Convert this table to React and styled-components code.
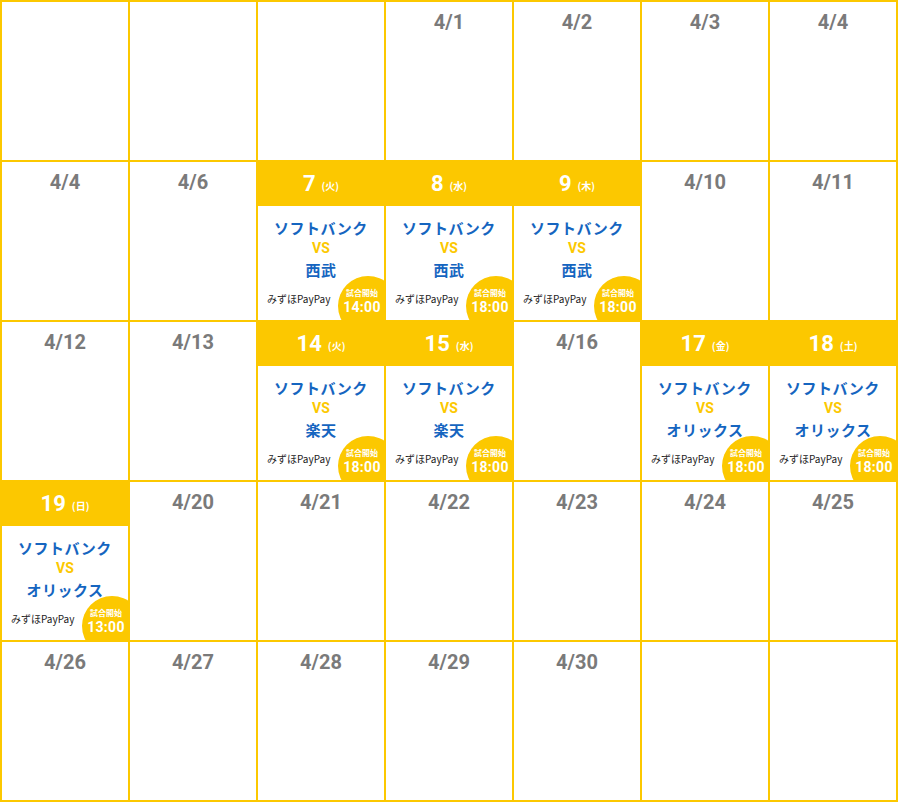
import React from "react";
import styled, { createGlobalStyle } from "styled-components";

const YELLOW = "#fcc800";
const BLUE = "#1565c0";

const Global = createGlobalStyle`
  html, body { margin: 0; padding: 0; background: #fff; }
  body { font-family: Roboto, "Noto Sans CJK JP", sans-serif; }
`;

const Grid = styled.div`
  display: grid;
  grid-template-columns: repeat(7, 126px);
  grid-auto-rows: 158px;
  gap: 2px;
  padding: 2px;
  width: 898px;
  box-sizing: border-box;
  background: ${YELLOW};
`;

const Cell = styled.div`
  position: relative;
  overflow: hidden;
  background: #fff;
  display: flex;
  flex-direction: column;
`;

const DateLabel = styled.div`
  text-align: center;
  font-family: Roboto, "Noto Sans CJK JP", sans-serif;
  font-weight: 700;
  font-size: 20px;
  line-height: 24px;
  color: #7a7a7a;
  padding-top: 8px;
`;

const Header = styled.div`
  height: 43px;
  background: ${YELLOW};
  display: flex;
  align-items: center;
  justify-content: center;
  gap: 6px;
  color: #fff;
  padding-bottom: 1px;
`;

const DayNum = styled.span`
  font-family: Roboto, "Noto Sans CJK JP", sans-serif;
  font-weight: 700;
  font-size: 22px;
  line-height: 26px;
`;

const Weekday = styled.span`
  font-family: "Noto Sans CJK JP", sans-serif;
  font-weight: 700;
  font-size: 10px;
  line-height: 12px;
  margin-top: 5px;
`;

const Teams = styled.div`
  display: flex;
  flex-direction: column;
  align-items: center;
  padding-top: 11px;
  font-family: "Noto Sans CJK JP", sans-serif;
  font-weight: 700;
  color: ${BLUE};
`;

const Team = styled.div`
  font-size: 15px;
  line-height: 21px;
  letter-spacing: 0.5px;
`;

const Vs = styled.div`
  font-family: Roboto, "Noto Sans CJK JP", sans-serif;
  font-size: 14px;
  line-height: 21px;
  color: ${YELLOW};
`;

const Stadium = styled.div`
  margin-top: auto;
  padding: 0 0 15px 9px;
  font-family: "Noto Sans CJK JP", sans-serif;
  font-size: 10px;
  line-height: 12px;
  color: #222;
`;

const StartBadge = styled.div`
  position: absolute;
  right: -14px;
  bottom: -16px;
  width: 60px;
  height: 60px;
  border-radius: 50%;
  background: ${YELLOW};
  color: #fff;
  display: flex;
  flex-direction: column;
  align-items: center;
  box-sizing: border-box;
  padding: 11px 12px 0 0;
`;

const StartLabel = styled.div`
  font-family: "Noto Sans CJK JP", sans-serif;
  font-weight: 700;
  font-size: 8px;
  line-height: 12px;
`;

const StartTime = styled.div`
  font-family: Roboto, sans-serif;
  font-weight: 700;
  font-size: 14px;
  line-height: 17px;
  letter-spacing: 0.3px;
`;

const ev = (day, wd, opp, time) => ({ type: "event", day, wd, opp, time });
const d = (label) => ({ type: "date", label });
const E = { type: "empty" };

const cells = [
  E, E, E, d("4/1"), d("4/2"), d("4/3"), d("4/4"),
  d("4/4"), d("4/6"), ev(7, "火", "西武", "14:00"), ev(8, "水", "西武", "18:00"), ev(9, "木", "西武", "18:00"), d("4/10"), d("4/11"),
  d("4/12"), d("4/13"), ev(14, "火", "楽天", "18:00"), ev(15, "水", "楽天", "18:00"), d("4/16"), ev(17, "金", "オリックス", "18:00"), ev(18, "土", "オリックス", "18:00"),
  ev(19, "日", "オリックス", "13:00"), d("4/20"), d("4/21"), d("4/22"), d("4/23"), d("4/24"), d("4/25"),
  d("4/26"), d("4/27"), d("4/28"), d("4/29"), d("4/30"), E, E,
];

function EventCell({ c }) {
  return (
    <Cell>
      <Header>
        <DayNum>{c.day}</DayNum>
        <Weekday>({c.wd})</Weekday>
      </Header>
      <Teams>
        <Team>ソフトバンク</Team>
        <Vs>VS</Vs>
        <Team>{c.opp}</Team>
      </Teams>
      <Stadium>みずほPayPay</Stadium>
      <StartBadge>
        <StartLabel>試合開始</StartLabel>
        <StartTime>{c.time}</StartTime>
      </StartBadge>
    </Cell>
  );
}

export default function App() {
  return (
    <>
      <Global />
      <Grid>
        {cells.map((c, i) => {
          if (c.type === "event") return <EventCell key={i} c={c} />;
          if (c.type === "date")
            return (
              <Cell key={i}>
                <DateLabel>{c.label}</DateLabel>
              </Cell>
            );
          return <Cell key={i} />;
        })}
      </Grid>
    </>
  );
}
